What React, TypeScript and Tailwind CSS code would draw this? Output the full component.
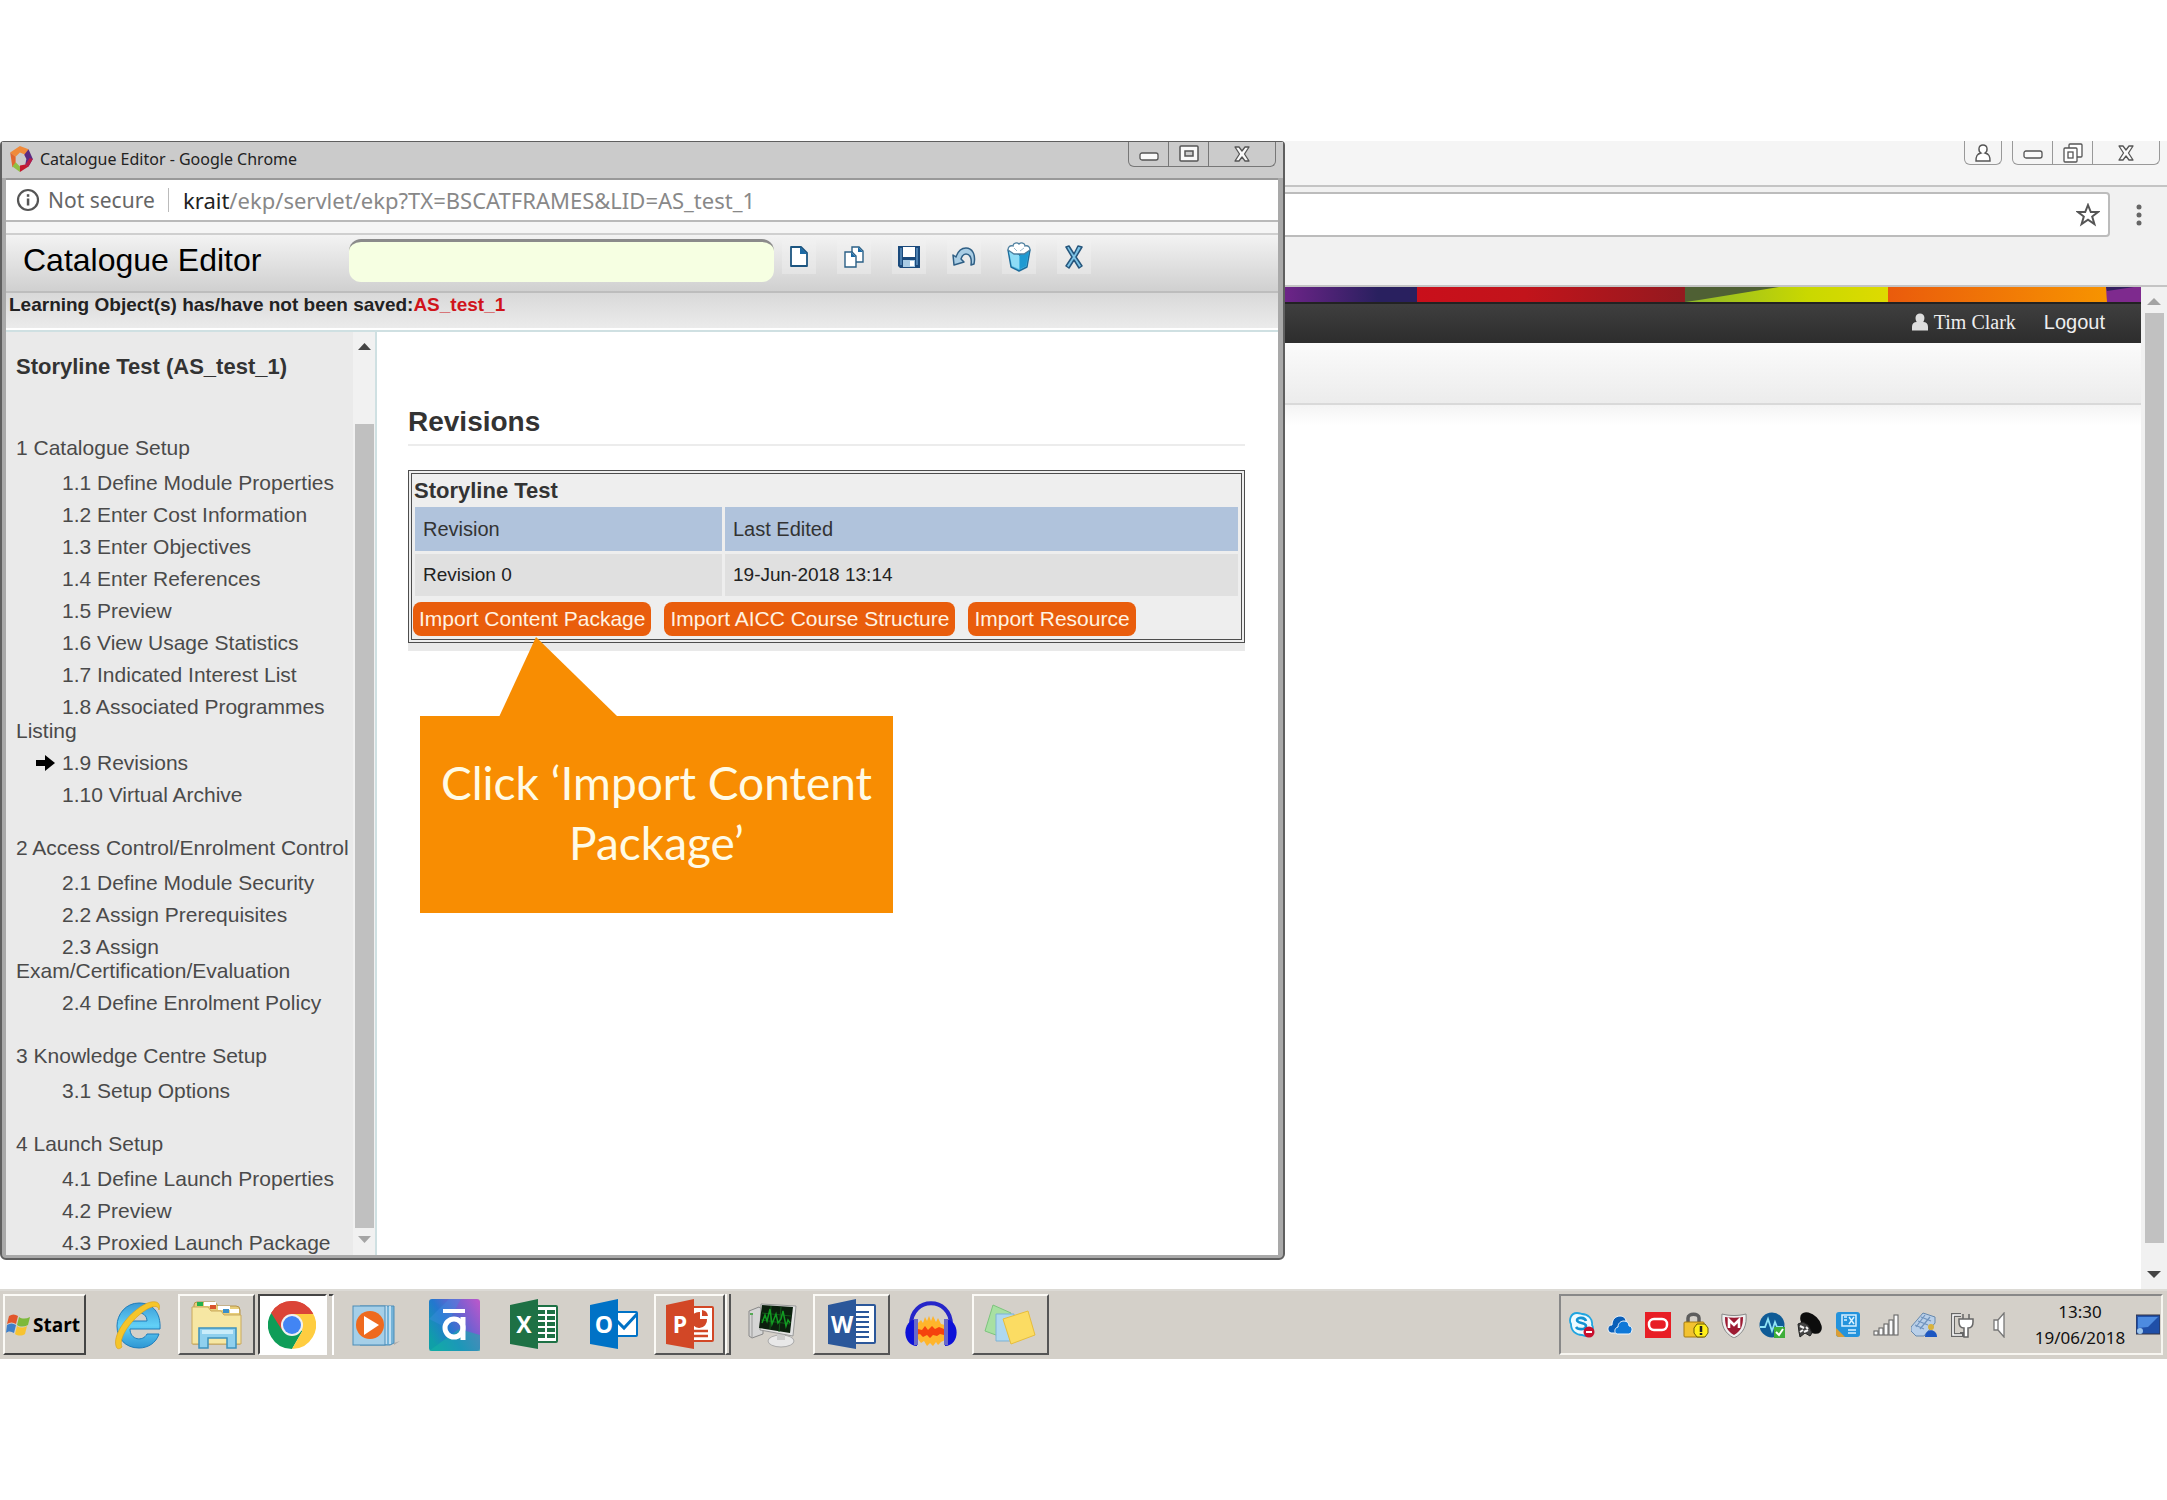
import React from "react";

type Item = { label: string; current?: boolean };
type Section = { title: string; items: Item[] };

const sections: Section[] = [
  {
    title: "1 Catalogue Setup",
    items: [
      { label: "1.1 Define Module Properties" },
      { label: "1.2 Enter Cost Information" },
      { label: "1.3 Enter Objectives" },
      { label: "1.4 Enter References" },
      { label: "1.5 Preview" },
      { label: "1.6 View Usage Statistics" },
      { label: "1.7 Indicated Interest List" },
      { label: "1.8 Associated Programmes Listing" },
      { label: "1.9 Revisions", current: true },
      { label: "1.10 Virtual Archive" },
    ],
  },
  {
    title: "2 Access Control/Enrolment Control",
    items: [
      { label: "2.1 Define Module Security" },
      { label: "2.2 Assign Prerequisites" },
      { label: "2.3 Assign Exam/Certification/Evaluation" },
      { label: "2.4 Define Enrolment Policy" },
    ],
  },
  { title: "3 Knowledge Centre Setup", items: [{ label: "3.1 Setup Options" }] },
  {
    title: "4 Launch Setup",
    items: [
      { label: "4.1 Define Launch Properties" },
      { label: "4.2 Preview" },
      { label: "4.3 Proxied Launch Package" },
    ],
  },
];

function CloseGlyph() {
  return (
    <svg width="18" height="18" viewBox="0 0 18 18" aria-hidden="true">
      <path
        d="M2 2h4l3 4 3-4h4l-4.500 7 4.500 7h-4l-3-4-3 4H2l4.500-7z"
        fill="#fafafa"
        stroke="#555"
        strokeWidth="1.300"
        strokeLinejoin="round"
      />
    </svg>
  );
}

function MinGlyph() {
  return (
    <svg width="20" height="10" viewBox="0 0 20 10" aria-hidden="true">
      <rect x="1" y="1" width="18" height="7" rx="2" fill="#fafafa" stroke="#555" strokeWidth="1.300" />
    </svg>
  );
}

function TitleBar() {
  return (
    <div className="flex h-9 items-start justify-between pl-[2px]">
      <div className="flex h-[34px] items-center gap-[6px]">
        <svg width="26" height="28" viewBox="0 0 24 26" aria-hidden="true">
          <path d="M2 7 11 1l8 3-3 5-5-2-4 4z" fill="#f08a3a" />
          <path d="M2 7l5 4v6l-3 4z" fill="#e2662f" />
          <path d="M4 20l3-4 4 4v5z" fill="#8fc043" />
          <path d="M11 25v-6l5-1 3 2z" fill="#c5192d" />
          <path d="M19 4l4 9-4 7-3-2 1-5-2-4z" fill="#5b2a82" />
          <path d="M19 20l4-7-3-1-4 6z" fill="#b81c46" />
        </svg>
        <span className="whitespace-nowrap font-['Noto_Sans','Open_Sans',sans-serif] text-[16px] leading-6 text-[#222]">
          Catalogue Editor - Google Chrome
        </span>
      </div>
      <div className="mr-[2px] flex h-[25px] rounded-b-md border border-t-0 border-[#777]">
        <button aria-label="Minimise" className="flex w-10 items-end justify-center border-r border-[#777] pb-1">
          <MinGlyph />
        </button>
        <button aria-label="Maximise" className="flex w-10 items-center justify-center border-r border-[#777]">
          <svg width="20" height="18" viewBox="0 0 20 18" aria-hidden="true">
            <rect x="1" y="1" width="18" height="15" rx="1" fill="#fafafa" stroke="#555" strokeWidth="1.500" />
            <rect x="6" y="6" width="8" height="5" fill="#ccc" stroke="#555" strokeWidth="1.500" />
          </svg>
        </button>
        <button aria-label="Close" className="flex w-[66px] items-center justify-center">
          <CloseGlyph />
        </button>
      </div>
    </div>
  );
}

function AddressBar() {
  return (
    <div className="flex h-[42px] items-center border-b-2 border-[#b9b9b9] bg-white pl-[10px] font-['Noto_Sans','Open_Sans',sans-serif] text-[22px] leading-7">
      <svg width="24" height="24" viewBox="0 0 24 24" aria-hidden="true">
        <circle cx="12" cy="12" r="10" fill="none" stroke="#555" strokeWidth="2.200" />
        <rect x="10.800" y="10.500" width="2.500" height="7" fill="#555" />
        <rect x="10.800" y="6.200" width="2.500" height="2.600" fill="#555" />
      </svg>
      <span className="ml-2 w-[106px] whitespace-nowrap text-[21px] text-[#666]">Not secure</span>
      <span className="mx-[14px] h-6 w-px bg-[#bbb]" />
      <span className="whitespace-nowrap text-[#888]">
        <span className="text-[#222]">krait</span>/ekp/servlet/ekp?TX=BSCATFRAMES&amp;LID=AS_test_1
      </span>
    </div>
  );
}

const toolClass = "flex size-[34px] items-center justify-center bg-[#f2f2f2]/40";

function Toolbar() {
  return (
    <div className="mt-[5px] flex items-center gap-[21px]">
      <button aria-label="New" className={toolClass}>
        <svg width="20" height="24" viewBox="0 0 20 24">
          <path d="M2 2h10l6 6v13H2z" fill="#fff" stroke="#1c5580" strokeWidth="1.800" strokeLinejoin="round" />
          <path d="M11 2l7 7h-7z" fill="#1c6aa5" />
        </svg>
      </button>
      <button aria-label="Copy" className={toolClass}>
        <svg width="22" height="24" viewBox="0 0 22 24">
          <path d="M9 2h7l4 4v11H9z" fill="#fff" stroke="#2b6086" strokeWidth="1.400" />
          <path d="M15 2l5 5h-5z" fill="#1c6aa5" />
          <path d="M2 7h7l4 4v11H2z" fill="#fff" stroke="#2b6086" strokeWidth="1.400" />
          <path d="M8 7l5 5H8z" fill="#1c6aa5" />
        </svg>
      </button>
      <button aria-label="Save" className={toolClass}>
        <svg width="24" height="24" viewBox="0 0 24 24">
          <path d="M1 1h22v22H3l-2-2z" fill="#1b4a7c" />
          <rect x="3" y="3" width="2" height="17" fill="#4d80b0" />
          <rect x="19" y="3" width="2" height="17" fill="#4d80b0" />
          <rect x="6" y="2" width="12" height="10" fill="#fff" />
          <rect x="6" y="15" width="12" height="7" fill="#a9cbe4" />
          <rect x="13" y="16" width="4" height="5" fill="#fff" />
        </svg>
      </button>
      <button aria-label="Undo" className={toolClass}>
        <svg width="24" height="20" viewBox="0 0 24 20">
          <path
            d="M1 8l3 2C6 4 10 1 14 1c6 0 10 6 8 16l-3 1c1-7-1-11-5-11-2 0-4 2-5 5l3 3-10 3z"
            fill="#a9cde4"
            stroke="#2f5f85"
            strokeWidth="1.500"
            strokeLinejoin="round"
          />
        </svg>
      </button>
      <button aria-label="Recycle bin" className={toolClass}>
        <svg width="26" height="30" viewBox="0 0 26 30">
          <path d="M2 8l3 17 8 4 8-4 3-17-11 5z" fill="#4db8e2" stroke="#1d6d9c" strokeWidth="1.400" strokeLinejoin="round" />
          <path d="M3 9l10 4v14l-7-3z" fill="#8edcf6" />
          <path d="M14 13l9-4-3 15-6 3z" fill="#1e9ad2" />
          <path d="M2 8c0-3 2-5 5-4 0-3 4-4 6-2 2-2 6-1 6 2 3-1 5 1 5 4l-6 4H8z" fill="#fff" stroke="#4d7f9f" strokeWidth="1.300" />
          <path d="M8 6l3 3M18 6l-4 3" stroke="#9bb9cc" strokeWidth="1" />
        </svg>
      </button>
      <button aria-label="Exit" className={toolClass}>
        <svg width="20" height="24" viewBox="0 0 20 24">
          <path
            d="M2 2l3-1 5 8 4-8 4 1-6 10 6 9-3 2-5-8-5 8-3-2 6-9z"
            fill="#7cc3e6"
            stroke="#26567c"
            strokeWidth="1.500"
            strokeLinejoin="round"
          />
        </svg>
      </button>
    </div>
  );
}

function Sidebar() {
  return (
    <nav className="flex w-[371px] shrink-0 border-r-2 border-[#cfe0e2] bg-[#eaeaea] text-[21px] leading-6 text-[#4a4a4a]">
      <div className="min-w-0 flex-1 pl-[10px] pt-[23px]">
        <h2 className="mb-[57px] whitespace-nowrap text-[22px] font-bold leading-6 text-[#333]">
          Storyline Test (AS_test_1)
        </h2>
        {sections.map((s) => (
          <section key={s.title} className="mb-[29px] last:mb-0">
            <h3 className="mb-[11px] whitespace-nowrap">{s.title}</h3>
            <ul className="flex flex-col gap-2">
              {s.items.map((it) => (
                <li key={it.label} className="relative">
                  {it.current && (
                    <svg className="absolute left-5 top-1" width="19" height="16" viewBox="0 0 19 16" aria-hidden="true">
                      <path d="M0 5h9V0l10 8-10 8v-5H0z" fill="#000" />
                    </svg>
                  )}
                  <a href="#" className="block indent-[46px]">
                    {it.label}
                  </a>
                </li>
              ))}
            </ul>
          </section>
        ))}
      </div>
      <div className="flex w-[22px] shrink-0 flex-col items-center bg-[#f1f1f1]">
        <svg className="mt-[11px]" width="13" height="7" viewBox="0 0 13 7" aria-hidden="true">
          <path d="M0 7l6.500-7L13 7z" fill="#444" />
        </svg>
        <div className="mt-[74px] w-[19px] flex-1 bg-[#c0c0c0]" />
        <svg className="mb-3 mt-2" width="13" height="7" viewBox="0 0 13 7" aria-hidden="true">
          <path d="M0 0l6.500 7L13 0z" fill="#a5a5a5" />
        </svg>
      </div>
    </nav>
  );
}

const orangeButton =
  "h-[34px] whitespace-nowrap rounded-lg bg-[#e95d0c] px-[6px] text-[21px] leading-6 text-[#fff3e2]";

function Revisions() {
  return (
    <main className="min-w-0 flex-1 bg-white pl-[31px] pr-[33px] pt-[74px]">
      <h1 className="border-b-2 border-[#ececec] pb-[6px] text-[28px] font-bold leading-8 text-[#333]">Revisions</h1>
      <div className="mt-6 border-b-8 border-[#e9e9e9]">
        <div className="border-4 border-double border-[#4d4d4d] bg-[#eee] pb-[3px]">
          <table className="w-full border-separate border-spacing-x-[3px] border-spacing-y-[3px] text-left">
            <caption className="px-[2px] pt-1 text-left text-[22px] font-bold leading-[26px] text-[#333]">
              Storyline Test
            </caption>
            <thead>
              <tr className="h-[44px] bg-[#b0c3dc] text-[20px] text-[#333]">
                <th className="w-[307px] px-2 font-normal">Revision</th>
                <th className="px-2 font-normal">Last Edited</th>
              </tr>
            </thead>
            <tbody>
              <tr className="h-[42px] bg-[#e0e0e0] text-[19px] text-[#222]">
                <td className="px-2">Revision 0</td>
                <td className="px-2">19-Jun-2018 13:14</td>
              </tr>
            </tbody>
          </table>
          <div className="mt-[3px] flex gap-[13px] pl-[1px]">
            <button className={orangeButton}>Import Content Package</button>
            <button className={orangeButton}>Import AICC Course Structure</button>
            <button className={orangeButton}>Import Resource</button>
          </div>
        </div>
      </div>
      <div className="relative ml-3 mt-[65px] flex h-[197px] w-[473px] items-center justify-center bg-[#f88d02] text-center">
        <svg className="absolute left-[79px] top-[-79px]" width="119" height="80" viewBox="0 0 119 80" aria-hidden="true">
          <path d="M37 0L119 80H0z" fill="#f88d02" />
        </svg>
        <p className="pb-1 font-['Lato',sans-serif] text-[46px] leading-[60px] text-[#fffbe6]">
          Click ‘Import Content
          <br />
          Package’
        </p>
      </div>
    </main>
  );
}

function EditorWindow() {
  return (
    <div className="flex flex-col rounded-b-md rounded-t border-2 border-t border-[#5f5f5f] bg-[#a9a9a9] pb-[3px]">
      <div className="bg-[#cbcbcb] pl-1 pr-[5px]">
        <TitleBar />
      </div>
      <div className="flex flex-col pl-1 pr-[5px]">
        <div className="border-t-2 border-[#999]">
          <AddressBar />
        </div>
        <div className="h-[11px] bg-[#f5f5f5]" />
        <header className="border-t-2 border-[#cfcfcf]">
          <div className="flex h-[58px] items-start border-b-2 border-[#bdbdbd] bg-linear-to-b from-[#f3f3f3] to-[#d0d0d0] pl-[17px]">
            <h1 className="mt-[7px] w-[326px] whitespace-nowrap text-[32px] leading-9 text-black">Catalogue Editor</h1>
            <input
              aria-label="Search"
              className="mr-2 mt-1 h-[43px] w-[425px] rounded-xl border-t-[3px] border-[#8b8b8b] bg-[#f6ffe2] px-3 text-xl outline-none"
            />
            <Toolbar />
          </div>
          <p className="h-[35px] bg-linear-to-b from-[#d9d9d9] to-[#ebebeb] pl-[3px] text-[19px] font-bold leading-6 text-[#222]">
            Learning Object(s) has/have not been saved:<span className="text-[#d0141b]">AS_test_1</span>
          </p>
        </header>
        <div className="bg-white pt-[2px]">
          <div className="flex border-t-2 border-[#cfe0e2]">
            <Sidebar />
            <Revisions />
          </div>
        </div>
      </div>
    </div>
  );
}

function BrowserWindow() {
  return (
    <div className="flex min-w-0 flex-1 flex-col bg-[#f1f1f1]">
      <div className="flex h-[44px] items-start justify-end gap-[10px] bg-[#f5f5f5] pr-[7px]">
        <button aria-label="Profile" className="flex h-6 w-[38px] items-center justify-center rounded-b-md border border-t-0 border-[#999]">
          <svg width="18" height="18" viewBox="0 0 18 18">
            <path
              d="M9 1c-5 0-5 6-2 8-4 1-5 3-5 8h14c0-5-1-7-5-8 3-2 3-8-2-8z"
              fill="#fff"
              stroke="#555"
              strokeWidth="1.400"
            />
          </svg>
        </button>
        <div className="flex h-6 rounded-b-md border border-t-0 border-[#999]">
          <button aria-label="Minimise" className="flex w-10 items-end justify-center border-r border-[#999] pb-1">
            <MinGlyph />
          </button>
          <button aria-label="Restore" className="flex w-10 items-center justify-center border-r border-[#999]">
            <svg width="22" height="20" viewBox="0 0 22 20">
              <rect x="7" y="1" width="13" height="13" rx="1" fill="#fff" stroke="#555" strokeWidth="1.300" />
              <rect x="2" y="5" width="13" height="14" rx="1" fill="#fff" stroke="#555" strokeWidth="1.300" />
              <rect x="6" y="9" width="5" height="6" fill="none" stroke="#555" strokeWidth="1.300" />
            </svg>
          </button>
          <button aria-label="Close" className="flex w-[66px] items-center justify-center">
            <CloseGlyph />
          </button>
        </div>
      </div>
      <div className="flex h-[102px] items-start border-b-2 border-t-2 border-[#c4c4c4] pt-[5px]">
        <div className="flex h-[45px] flex-1 items-center justify-end rounded-r border-2 border-l-0 border-[#bcbcbc] bg-white pr-2">
          <button aria-label="Bookmark">
            <svg width="24" height="24" viewBox="0 0 24 24">
              <path
                d="M12 2l2.800 7H22l-5.800 4.500 2.200 7.500L12 16.600 5.600 21l2.200-7.500L2 9h7.200z"
                fill="#fff"
                stroke="#555"
                strokeWidth="2"
              />
            </svg>
          </button>
        </div>
        <button aria-label="Menu" className="flex h-[45px] w-[57px] items-center justify-center">
          <svg width="6" height="22" viewBox="0 0 6 22">
            <circle cx="3" cy="3" r="2.500" fill="#666" />
            <circle cx="3" cy="11" r="2.500" fill="#666" />
            <circle cx="3" cy="19" r="2.500" fill="#666" />
          </svg>
        </button>
      </div>
      <div className="flex flex-1">
        <div className="flex min-w-0 flex-1 flex-col bg-white">
          <svg className="block h-[15px] w-full" viewBox="0 0 856 15" preserveAspectRatio="none" aria-hidden="true">
            <defs>
              <linearGradient id="purple"><stop offset="0" stopColor="#6d2488" /><stop offset=".7" stopColor="#29205f" /></linearGradient>
              <linearGradient id="red"><stop offset="0" stopColor="#c90f1b" /><stop offset=".4" stopColor="#c2141b" /><stop offset="1" stopColor="#93191f" /></linearGradient>
              <linearGradient id="lime"><stop offset="0" stopColor="#8db82a" /><stop offset=".6" stopColor="#c9d800" /><stop offset="1" stopColor="#dedb00" /></linearGradient>
              <linearGradient id="amber"><stop offset="0" stopColor="#ea5b0c" /><stop offset="1" stopColor="#f79400" /></linearGradient>
            </defs>
            <rect width="133" height="15" fill="url(#purple)" />
            <rect x="132" width="268" height="15" fill="url(#red)" />
            <rect x="400" width="203" height="15" fill="url(#lime)" />
            <path d="M400 0h94l-80 13-14 2z" fill="#4f6034" />
            <rect x="603" width="220" height="15" fill="url(#amber)" />
            <path d="M821 0h35v15h-34z" fill="#7e2a8e" />
            <path d="M821 0h28l-27 4z" fill="#33205f" />
          </svg>
          <div className="flex h-[41px] items-center justify-end border-t-2 border-[#222] bg-linear-to-b from-[#3f3f3f] to-[#2d2d2d] pb-1 pr-9 text-[20px] leading-6 text-[#eee]">
            <a href="#" className="flex items-center gap-[6px] font-['Liberation_Serif',serif]">
              <svg width="16" height="18" viewBox="0 0 17 18" aria-hidden="true">
                <path d="M8.500 0C3 0 3 6 5 9c-3 0-5 2-5 5v4h17v-4c0-3-2-5-5-5 2-3 2-9-3.500-9z" fill="#ddd" />
              </svg>
              Tim Clark
            </a>
            <a href="#" className="ml-7">
              Logout
            </a>
          </div>
          <div className="h-[62px] border-b-2 border-[#d9d9d9] bg-linear-to-b from-[#fbfbfb] to-[#ececec]" />
          <div className="h-5 bg-linear-to-b from-[#f4f4f4] to-white" />
        </div>
        <div className="flex w-[26px] shrink-0 flex-col items-center bg-[#f1f1f1]">
          <svg className="mt-[11px]" width="14" height="7" viewBox="0 0 14 7" aria-hidden="true">
            <path d="M0 7l7-7 7 7z" fill="#a3a3a3" />
          </svg>
          <div className="mt-2 w-[19px] flex-1 bg-[#c1c1c1]" />
          <svg className="mb-[11px] mt-7" width="14" height="7" viewBox="0 0 14 7" aria-hidden="true">
            <path d="M0 0l7 7 7-7z" fill="#444" />
          </svg>
        </div>
      </div>
    </div>
  );
}

function OfficeIcon({ color, letter, children }: { color: string; letter: string; children: React.ReactNode }) {
  return (
    <svg width="50" height="52" viewBox="0 0 50 52" aria-hidden="true">
      {children}
      <path d="M1 6l28-6v50L1 45z" fill={color} />
      <text x="15" y="34" textAnchor="middle" fontFamily="'Open Sans', sans-serif" fontWeight="700" fontSize="23" fill="#fff">
        {letter}
      </text>
    </svg>
  );
}

const raised = "border-2 border-b-[#555] border-l-[#fbfaf6] border-r-[#555] border-t-[#fbfaf6]";

const apps: { name: string; frame: string; icon: React.ReactNode }[] = [
  {
    name: "Internet Explorer",
    frame: "",
    icon: (
      <svg width="50" height="52" viewBox="0 0 50 52" aria-hidden="true">
        <defs>
          <linearGradient id="ie" x2="0" y2="1"><stop offset="0" stopColor="#3b9bd6" /><stop offset=".5" stopColor="#62d0f7" /><stop offset="1" stopColor="#2e96d3" /></linearGradient>
        </defs>
        <path
          d="M47 30H17c0 11 13 13 17 5h12c-3 9-11 14-20 14C12 49 4 39 4 27S13 4 26 4c14 0 22 10 21 26zM17 22h17c0-11-17-11-17 0z"
          fill="url(#ie)"
          stroke="#1f7dbb"
          strokeWidth="1"
        />
        <path d="M46 11C49 1 39 0 27 8 11 19 0 37 3 47c1 4 4 3 6 1-3-7 4-20 16-31C35 8 45 4 46 11z" fill="#f5c52b" stroke="#d99c14" strokeWidth=".6" />
      </svg>
    ),
  },
  {
    name: "File Explorer",
    frame: raised,
    icon: (
      <svg width="52" height="50" viewBox="0 0 52 50" aria-hidden="true">
        <path d="M3 5q0-3 3-3h18l3 4h18q4 0 4 4v34H2z" fill="#e8ce7a" stroke="#b4924a" />
        <rect x="6" y="2" width="6" height="4" fill="#22b14c" />
        <rect x="13" y="2" width="12" height="4" fill="#fff" />
        <rect x="19" y="5" width="6" height="4" fill="#d9532c" />
        <rect x="27" y="6" width="12" height="4" fill="#fff" />
        <rect x="32" y="9" width="6" height="4" fill="#3a8fc9" />
        <rect x="39" y="9" width="9" height="4" fill="#fff" />
        <path d="M1 7h16l3 4h10l3 4h17v29H1z" fill="#f6e7a3" stroke="#c9a95c" />
        <path d="M8 28h37v20h-9V38H17v10H8z" fill="#8fd0ee" stroke="#3d91bd" strokeWidth="1.500" />
        <path d="M11 30h31v4H11z" fill="#c9ecfa" />
      </svg>
    ),
  },
  {
    name: "Google Chrome",
    frame: "chrome",
    icon: (
      <svg width="48" height="50" viewBox="0 0 48 48" aria-hidden="true">
        <path d="M24 24L3.200 12A24 24 0 0 1 44.800 12z" fill="#db4437" />
        <path d="M3.200 12A24 24 0 0 0 24 48L34.400 30 24 24z" fill="#0f9d58" />
        <path d="M44.800 12A24 24 0 0 1 24 48l10.400-18L24 12z" fill="#ffcd40" />
        <path d="M24 13h21.300A24 24 0 0 0 3.200 12L14 29z" fill="#db4437" />
        <circle cx="24" cy="24" r="11" fill="#f1f1f1" />
        <circle cx="24" cy="24" r="9" fill="#4285f4" />
      </svg>
    ),
  },
  {
    name: "Media Player",
    frame: "",
    icon: (
      <svg width="48" height="44" viewBox="0 0 48 44" aria-hidden="true">
        <path d="M8 3h34v37l-4 2H8z" fill="#74b3d8" stroke="#4c8db8" />
        <path d="M38 3v38M34 3v38" stroke="#dceefa" strokeWidth="1.500" />
        <path d="M42 40l6-2-6 4z" fill="#aaa" />
        <rect x="1" y="3" width="32" height="39" fill="#a5cfe8" stroke="#4c8db8" />
        <circle cx="18" cy="22" r="14" fill="#ee6a1f" />
        <path d="M12 13l15 9-15 10z" fill="#fff" />
      </svg>
    ),
  },
  {
    name: "Authoring tool",
    frame: "",
    icon: (
      <svg width="51" height="52" viewBox="0 0 51 52" aria-hidden="true">
        <defs>
          <linearGradient id="auth" x1="0" y1=".7" x2="1" y2=".1"><stop offset="0" stopColor="#0f9fa8" /><stop offset=".35" stopColor="#2477cf" /><stop offset=".7" stopColor="#7b5fd0" /><stop offset="1" stopColor="#b758cb" /></linearGradient>
        </defs>
        <rect width="51" height="52" rx="3" fill="url(#auth)" />
        <path d="M0 52L30 30l21 6v16z" fill="#16b3a5" opacity=".55" />
        <path d="M0 20L20 0h12L16 28z" fill="#3f8fe0" opacity=".4" />
        <rect x="14" y="10" width="22" height="4" fill="#fff" />
        <circle cx="25" cy="29" r="9" fill="none" stroke="#fff" strokeWidth="5" />
        <path d="M34 18v23" stroke="#fff" strokeWidth="5" />
      </svg>
    ),
  },
  {
    name: "Excel",
    frame: "",
    icon: (
      <OfficeIcon color="#1e7145" letter="X">
        <rect x="20" y="7" width="28" height="36" rx="1" fill="#fff" stroke="#1e7145" strokeWidth="2" />
        <path d="M28 13h8M38 13h8M28 19h8M38 19h8M28 25h8M38 25h8M28 31h8M38 31h8M28 37h8M38 37h8" stroke="#1e7145" strokeWidth="4" />
      </OfficeIcon>
    ),
  },
  {
    name: "Outlook",
    frame: "",
    icon: (
      <OfficeIcon color="#0072c6" letter="O">
        <rect x="20" y="13" width="28" height="24" rx="1" fill="#fff" stroke="#0072c6" strokeWidth="2" />
        <path d="M24 18l11 11 13-14" fill="none" stroke="#0072c6" strokeWidth="3" />
      </OfficeIcon>
    ),
  },
  {
    name: "PowerPoint",
    frame: "stack",
    icon: (
      <OfficeIcon color="#d24726" letter="P">
        <rect x="20" y="8" width="28" height="34" rx="1" fill="#fff" stroke="#d24726" strokeWidth="2" />
        <path d="M35 13v7h7a8 8 0 1 1-7-7z" fill="#d24726" />
        <path d="M37 11a7 7 0 0 1 6 6h-6z" fill="#d24726" />
        <path d="M28 32h15M28 37h15" stroke="#d24726" strokeWidth="2.500" />
      </OfficeIcon>
    ),
  },
  {
    name: "Task Manager",
    frame: "",
    icon: (
      <svg width="50" height="48" viewBox="0 0 50 48" aria-hidden="true">
        <path d="M2 10l10-4 4 3v24L5 37l-3-2z" fill="#d5d5d5" stroke="#888" />
        <path d="M5 13v23" stroke="#999" />
        <rect x="3" y="12" width="3" height="2" fill="#5a5" />
        <ellipse cx="34" cy="40" rx="13" ry="6" fill="#e8e8e8" stroke="#aaa" />
        <path d="M30 30h8v9h-8z" fill="#ccc" />
        <path d="M14 3l35 2-3 30-33-6z" fill="#e4e4e4" stroke="#999" />
        <path d="M15 4l31 2-3 26-31-5z" fill="#0b1f0d" />
        <path d="M15 12l29 3M14 19l29 4M24 5l-1 23M34 6l-2 25" stroke="#14641c" strokeWidth=".8" />
        <path d="M15 22l3-8 2 6 3-12 2 15 4-10 2 9 3-4 2-8 3 15 2-6 2 3" fill="none" stroke="#129a22" strokeWidth="1.500" />
      </svg>
    ),
  },
  {
    name: "Word",
    frame: raised,
    icon: (
      <OfficeIcon color="#2b579a" letter="W">
        <rect x="20" y="6" width="28" height="38" rx="1" fill="#fff" stroke="#2b579a" strokeWidth="2" />
        <path d="M28 13h14M28 18h14M28 23h14M28 28h14M28 33h14M28 38h14" stroke="#2b579a" strokeWidth="2" />
      </OfficeIcon>
    ),
  },
  {
    name: "Audacity",
    frame: "",
    icon: (
      <svg width="52" height="48" viewBox="0 0 52 48" aria-hidden="true">
        <path d="M13 22l3-3 2 3 2-6 2 4 2-5 2 5 2-5 3 6 2-4 3 6 4 1v15l-4 2-3 3-2-3-3 4-3-3-3 3-3-5-3 2-3-4z" fill="#ffb52b" />
        <path d="M13 28l4 1 3-4 3 4 4-4 3 3 4-2 5 2v6l-4-1-3 2-4-1-3 3-3-3-4 2-3-3-5 1z" fill="#f5420d" />
        <path d="M6 24C6-5 46-5 46 24" fill="none" stroke="#2626c9" strokeWidth="4" />
        <path d="M12 18C-4 19-3 45 12 45z" fill="#0d11d8" />
        <path d="M40 18c16 1 15 27 0 27z" fill="#0d11d8" />
        <path d="M9 18h4v26H9zM39 18h4v26h-4z" fill="#6969c9" />
      </svg>
    ),
  },
  {
    name: "Sticky Notes",
    frame: raised,
    icon: (
      <svg width="52" height="44" viewBox="0 0 52 44" aria-hidden="true">
        <path d="M9 2l18 8-7 25-19-7z" fill="#a8e0a2" stroke="#7cc57d" />
        <path d="M12 11h18v27H12z" fill="#aed8f0" stroke="#7fb3d6" />
        <path d="M19 16l25-8 7 24-24 9z" fill="#fbdc63" stroke="#e6bd3c" />
      </svg>
    ),
  },
];

function AppButton({ name, frame, icon }: { name: string; frame: string; icon: React.ReactNode }) {
  if (frame === "chrome") {
    return (
      <button aria-label={name} className="flex h-[61px] w-[77px] gap-[2px]">
        <span className="flex h-full w-[69px] items-center justify-center border-2 border-b-white border-l-[#444] border-r-white border-t-[#444] bg-white">
          {icon}
        </span>
        <span className="h-full w-[5px] border-r-2 border-t-2 border-r-white border-t-[#444]" />
      </button>
    );
  }
  if (frame === "stack") {
    return (
      <button aria-label={name} className="flex h-[61px] w-[77px]">
        <span className="flex h-full w-[71px] items-center justify-center border-2 border-b-[#555] border-l-[#fbfaf6] border-r-[#555] border-t-[#fbfaf6]">
          {icon}
        </span>
        <span className="h-full w-[6px] border-b-2 border-l-2 border-r-2 border-b-[#555] border-l-[#fbfaf6] border-r-[#555]" />
      </button>
    );
  }
  return (
    <button aria-label={name} className={`flex h-[61px] w-[77px] items-center justify-center ${frame}`}>
      {icon}
    </button>
  );
}

const tray: { name: string; icon: React.ReactNode }[] = [
  {
    name: "Skype",
    icon: (
      <>
        <path
          d="M8 1c3 0 4 1 5 1 6 0 11 5 10 11 2 3 1 10-6 11-2 0-3-1-4-1C7 23 2 19 2 12 0 9 1 1 8 1z"
          fill="#eefaff"
          stroke="#1fa5e0"
          strokeWidth="1.800"
        />
        <path d="M17 9c-1-4-9-4-9-1 0 4 9 2 9 6 0 4-8 4-10 1" fill="none" stroke="#1492d1" strokeWidth="2.600" />
        <circle cx="20" cy="20" r="5.500" fill="#c8102e" />
        <rect x="17" y="19" width="6" height="2" fill="#fff" />
      </>
    ),
  },
  {
    name: "OneDrive",
    icon: (
      <>
        <path d="M2 20c-2-3-1-7 3-7 0-6 4-9 8-9 3 0 6 2 6 5l-6 12H4z" fill="#0a5fb8" stroke="#f4f8fc" />
        <path d="M10 22c-3-1-3-6 1-7 0-4 3-6 6-6s5 2 5 5c4 0 4 7 0 8z" fill="#0f78d8" stroke="#f4f8fc" />
      </>
    ),
  },
  {
    name: "Oracle",
    icon: (
      <>
        <rect width="26" height="26" fill="#e81e25" />
        <rect x="4" y="7" width="18" height="11" rx="5" fill="none" stroke="#fff" strokeWidth="2.500" />
      </>
    ),
  },
  {
    name: "Security lock",
    icon: (
      <>
        <path d="M5 12V6c0-5 11-5 11 0v6" fill="none" stroke="#5d5d5d" strokeWidth="3.500" />
        <rect x="1" y="10" width="20" height="15" rx="1" fill="#f2c230" stroke="#a3780f" />
        <path d="M14 12h8l3 4v5l-3 4h-8l-3-4v-5z" fill="#ffee1a" stroke="#6b5b00" />
        <path d="M18 14v6M18 21v2" stroke="#222" strokeWidth="2.500" />
      </>
    ),
  },
  {
    name: "McAfee",
    icon: (
      <>
        <path d="M1 2c8 2 16 2 24 0 1 11-2 19-12 24C3 21 0 13 1 2z" fill="#eee" stroke="#888" />
        <path d="M4 5c6 1 12 1 18 0 0 9-2 14-9 18C6 19 4 14 4 5z" fill="#9d1b33" />
        <path d="M8 16V8l5 5 5-5v8" fill="none" stroke="#fff" strokeWidth="2.600" />
      </>
    ),
  },
  {
    name: "Monitoring agent",
    icon: (
      <>
        <circle cx="13" cy="13" r="12.500" fill="#0f5b96" />
        <path d="M1 15h5l3-8 4 12 3-9 2 5h6" fill="none" stroke="#8fe3f5" strokeWidth="1.800" />
        <rect x="15" y="15" width="11" height="11" fill="#3fae3a" />
        <path d="M17 20l3 3 4-6" fill="none" stroke="#fff" strokeWidth="2" />
      </>
    ),
  },
  {
    name: "Satellite",
    icon: (
      <>
        <ellipse cx="14" cy="11" rx="13" ry="8" transform="rotate(45 14 11)" fill="#0d0d0d" />
        <path d="M1 12l5-2 5 3 4 8-2 3-5-3-5 4-1-5z" fill="#444" stroke="#222" />
        <path d="M3 14l4 2M7 20l4-2M3 20l3-2M9 15l2 2" stroke="#f2f2f2" strokeWidth="2" />
      </>
    ),
  },
  {
    name: "Graphics settings",
    icon: (
      <>
        <rect x="1" y="0" width="24" height="25" rx="3" fill="#2493dc" />
        <path d="M1 16l9 9H3l-2-2z" fill="#d99e38" />
        <rect x="7" y="3" width="14" height="11" fill="none" stroke="#d8f1ff" strokeWidth="1.500" />
        <path d="M14 5l5 7M19 5l-5 7M9 5h3M9 8h3M13 18h8M13 21h8" stroke="#d8f1ff" strokeWidth="1.500" />
      </>
    ),
  },
  {
    name: "Network signal",
    icon: (
      <g fill="#fafafa" stroke="#666" strokeWidth="1.100">
        <rect x="1" y="19" width="4" height="4" />
        <rect x="6" y="16" width="4" height="7" />
        <rect x="11" y="12" width="4" height="11" />
        <rect x="16" y="8" width="4" height="15" />
        <rect x="21" y="3" width="4" height="20" />
      </g>
    ),
  },
  {
    name: "Keyboard user",
    icon: (
      <>
        <path d="M12 1l12 4v6L13 24H5l-5-5v-4z" fill="#b9cfe8" stroke="#6688ad" />
        <path d="M10 5l10 4M7 9l10 4M4 13l9 4M14 3L5 15M19 5L9 17" stroke="#6f93bd" strokeWidth="1.200" />
        <circle cx="20" cy="15" r="3" fill="#d9b23c" />
        <path d="M14 25c0-9 12-9 12 0z" fill="#1d57c1" />
      </>
    ),
  },
  {
    name: "Power",
    icon: (
      <>
        <path d="M12 3H4v20h9v-3" fill="none" stroke="#666" strokeWidth="4" />
        <path d="M12 3H4v20h9" fill="none" stroke="#fff" strokeWidth="1.600" />
        <path d="M14 2v5M20 2v5M10 7h14v3c0 5-3 6-5 6v9h-4v-9c-3 0-5-2-5-6z" fill="#fff" stroke="#666" strokeWidth="1.500" />
      </>
    ),
  },
  {
    name: "Volume",
    icon: <path d="M7 8h4l6-7v24l-6-7H7z M11 8v10" fill="#fdfdfd" stroke="#777" strokeWidth="1.300" />,
  },
];

function Taskbar() {
  return (
    <footer className="flex h-[70px] items-start border-t-2 border-[#dcdad5] bg-[#d4d0c9] pl-[3px] pt-[3px]">
      <button className="flex h-[61px] w-[83px] shrink-0 items-center gap-[2px] border-2 border-b-[#444] border-l-[#fbfaf6] border-r-[#444] border-t-[#fbfaf6] pl-px font-['Open_Sans',sans-serif] text-[19px] font-bold leading-6 text-black">
        <svg width="25" height="24" viewBox="0 0 25 24" aria-hidden="true">
          <path d="M3 3c3-2 6-2 9 0l-2 8c-3-2-6-2-9 0z" fill="#e2562b" />
          <path d="M13 4c3 2 7 2 11 0l-2 8c-4 2-8 2-11 0z" fill="#7db93b" />
          <path d="M1 12c3-2 6-2 9 0l-2 8c-3-2-6-2-8 0z" fill="#3e7fc9" />
          <path d="M11 13c3 2 6 2 10 0l-2 8c-3 2-7 2-10 0z" fill="#f7c331" />
        </svg>
        Start
      </button>
      <div className="ml-[13px] grid w-[952px] shrink-0 grid-cols-12">
        {apps.map((a) => (
          <AppButton key={a.name} {...a} />
        ))}
      </div>
      <div className="ml-auto mr-1 flex h-[61px] shrink-0 items-center border-2 border-b-[#f7f5f0] border-l-[#888] border-r-[#f7f5f0] border-t-[#888] pl-2">
        <div className="flex gap-3">
          {tray.map((t) => (
            <button key={t.name} aria-label={t.name} className="size-[26px]">
              <svg width="26" height="26" viewBox="0 0 26 26">
                {t.icon}
              </svg>
            </button>
          ))}
        </div>
        <div className="ml-[17px] w-[100px] text-center font-['Noto_Sans','Open_Sans',sans-serif] text-[17px] leading-[26px] text-[#111]">
          <div>13:30</div>
          <div>19/06/2018</div>
        </div>
        <svg className="ml-[6px] mr-[1px]" width="24" height="22" viewBox="0 0 24 22" aria-hidden="true">
          <rect x="0" y="1" width="24" height="19" fill="#1f4fa8" stroke="#334" strokeWidth="1" />
          <path d="M2 3h20L12 13 2 14z" fill="#4d8be0" />
          <circle cx="4" cy="17" r="3" fill="#9cc4ec" />
        </svg>
      </div>
    </footer>
  );
}

export default function App() {
  return (
    <div className="min-h-screen bg-white pt-[141px] font-['Liberation_Sans',Arial,sans-serif]">
      <div className="flex">
        <div className="w-[59.3%] shrink-0 pb-[29px]">
          <EditorWindow />
        </div>
        <BrowserWindow />
      </div>
      <Taskbar />
    </div>
  );
}
